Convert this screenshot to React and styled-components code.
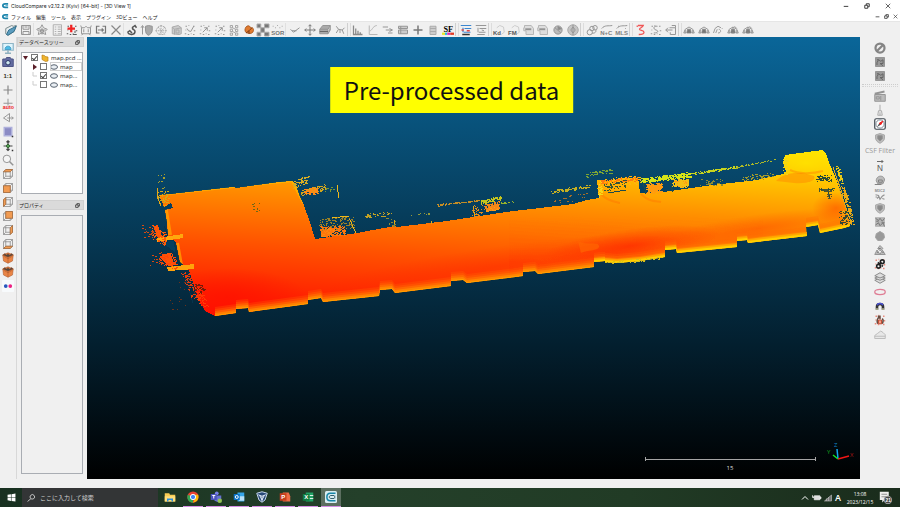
import React, { useState } from "react"
import styled, { createGlobalStyle } from "styled-components"

const GlobalStyle = createGlobalStyle`
  * { box-sizing: border-box; }
  body {
    margin: 0;
    background: #f0f0f0;
    color: #222;
    font-family: "Open Sans", "Noto Sans CJK JP", sans-serif;
    font-size: 5px;
  }
  button, input { font: inherit; color: inherit; }
  button {
    display: flex;
    align-items: center;
    justify-content: center;
    padding: 0;
    border: 0;
    background: transparent;
  }
`
const Page = styled.div`
  display: flex;
  flex-direction: column;
  min-height: 100vh;
`
const TitleBar = styled.header`
  display: flex;
  align-items: center;
  gap: 2px;
  height: 11px;
  padding: 0 2px;
  background: #fff;
`
const Title = styled.h1`
  flex: 1;
  margin: 0;
  font-family: Inter, sans-serif;
  font-size: 5px;
  font-weight: 400;
`
const MenuBar = styled.nav`
  display: flex;
  align-items: center;
  gap: 2px;
  height: 10px;
  padding: 0 2px;
  background: #fff;
`
const Menus = styled.div`
  display: flex;
  flex: 1;
  gap: 5px;
`
const WindowButtons = styled.div`
  display: flex;
  gap: ${(p) => (p.$small ? "4px" : "15px")};
  padding-right: ${(p) => (p.$small ? "0" : "7px")};
`
const ToolBar = styled.div`
  display: flex;
  align-items: center;
  height: 16px;
  padding-left: 4px;
  border-top: 1px solid #e6e6e6;
  background: #f0f0f0;
`
const ToolGroup = styled.div`
  display: grid;
  grid-template-columns: repeat(${(p) => p.$count}, 1fr);
  width: ${(p) => p.$width}px;
`
const Divider = styled.span`
  width: ${(p) => (p.$wide ? 4 : 2)}px;
  height: 13px;
  border-left: 1px solid ${(p) => (p.$wide ? "#cfcfcf" : "#e0e0e0")};
  border-right: ${(p) => (p.$wide ? "1px solid #dcdcdc" : "0")};
`
const ToolButton = styled.button`
  height: 14px;
`
const Glyph = styled.svg`
  display: block;
  flex: none;
  overflow: visible;
  width: ${(p) => p.$size || 12}px;
  height: ${(p) => p.$size || 12}px;
  fill: none;
  stroke: #949494;
  stroke-width: 1.3;
  text { stroke: none; font-family: "Liberation Sans", sans-serif; font-weight: 700; }
`
const Main = styled.main`
  display: flex;
  flex: 1;
  padding-bottom: 9px;
`
const SideBar = styled.aside`
  display: flex;
  flex-direction: column;
  width: ${(p) => p.$width}px;
  padding-top: 4px;
  border-right: ${(p) => (p.$left ? "1px solid #d8d8d8" : "0")};
`
const SideLabel = styled.span`
  height: 14px;
  color: #999;
  font-size: 7px;
  line-height: 12px;
  text-align: center;
  white-space: nowrap;
`
const SideRule = styled.hr`
  width: 36px;
  height: 3px;
  margin: 1px 2px 2px;
  border: 0;
  border-top: 1px dotted #ccc;
  border-bottom: 1px dotted #d4d4d4;
`
const Docks = styled.div`
  display: flex;
  flex-direction: column;
  gap: 6px;
  width: 70px;
  padding: 0 3px 5px 0;
`
const Dock = styled.section`
  display: flex;
  flex-direction: column;
  flex: ${(p) => (p.$grow ? "1" : "0 0 157px")};
`
const DockHeader = styled.header`
  display: flex;
  align-items: center;
  justify-content: space-between;
  height: 10px;
  padding: 0 3px 0 1px;
  border: 1px solid #d0d0d0;
  background: #dadada;
  line-height: 8px;
`
const DockBody = styled.div`
  flex: 1;
  margin: 5px 1px 0 4px;
  border: 1px solid #a9adb3;
  background: ${(p) => p.$bg};
`
const TreeRow = styled.div`
  display: flex;
  align-items: center;
  gap: 3px;
  height: 9px;
  padding-left: ${(p) => (p.$child ? 10 : 1)}px;
  font-size: 6px;
  line-height: 8px;
`
const Twisty = styled.svg`
  width: 5px;
  height: 7px;
  flex: none;
`
const Check = styled.input`
  appearance: none;
  display: grid;
  place-items: center;
  flex: none;
  width: 7px;
  height: 7px;
  margin: 0;
  border: 1px solid #777;
  background: #fff;
  &:checked::after {
    content: "";
    width: 2px;
    height: 4px;
    border: solid #444;
    border-width: 0 1px 1px 0;
    transform: rotate(40deg);
  }
`
const TreeLabel = styled.label`
  display: flex;
  align-items: center;
  gap: 2px;
  flex: 1;
  height: 9px;
  white-space: nowrap;
  outline: ${(p) => (p.$current ? "1px solid #d0d0d0" : "none")};
  outline-offset: -1px;
`
const Viewport = styled.section`
  position: relative;
  flex: 1;
  min-width: 0;
  background: linear-gradient(#0a6699, #000);
`
const Scene = styled.svg`
  display: block;
  width: 100%;
  height: 100%;
  text { font-family: "Open Sans", sans-serif; }
`
const Caption = styled.div`
  position: absolute;
  top: 30px;
  left: 50%;
  transform: translateX(-50%);
  margin-left: -22px;
  padding: 0 14px;
  background: #ffff00;
  color: #111;
  font-family: "Noto Sans CJK JP", sans-serif;
  font-size: 24px;
  line-height: 46px;
  white-space: nowrap;
`
const TaskBar = styled.footer`
  display: flex;
  align-items: stretch;
  height: 19px;
  background: linear-gradient(90deg, #183020, #24402a 40%, #213b25 70%, #1a2c1c);
  color: #fff;
`
const StartButton = styled.button`
  width: 22px;
`
const Search = styled.label`
  display: flex;
  align-items: center;
  gap: 4px;
  width: 136px;
  padding-left: 5px;
  background: #333536;
`
const SearchInput = styled.input`
  width: 110px;
  padding: 0;
  border: 0;
  outline: 0;
  background: transparent;
  font-family: "Noto Sans CJK JP", sans-serif;
  font-size: 6px;
  &::placeholder { color: #d0d0d0; opacity: 1; }
`
const Apps = styled.div`
  display: flex;
  flex: 1;
  gap: 3px;
  padding-left: 2px;
`
const AppButton = styled.button`
  width: 20px;
  border-bottom: 1px solid ${(p) => (p.$open ? "#d58ee4" : "transparent")};
  background: ${(p) => (p.$active ? "#5c6f60" : "transparent")};
`
const Tray = styled.div`
  display: flex;
  align-items: center;
  gap: 3px;
  padding-right: 8px;
`
const InputMode = styled.span`
  font-size: 9px;
  font-weight: 600;
`
const Clock = styled.time`
  width: 32px;
  font-size: 5px;
  line-height: 8px;
  text-align: center;
`

const G = "#949494"
const D = "#777"

// small cube used by the view buttons, with one side painted
const Cube = ({ side }) => (
  <g stroke="#888" strokeWidth="1">
    <path d="M2 5h9v9H2zM2 5l3-3h9l-3 3M14 2v9l-3 3M5 2v9h9M5 11l-3 3" />
    {side && <path d={side} fill="#f19b52" stroke="#a66a3a" />}
  </g>
)
const Box = () => (
  <g stroke="#a9572a" strokeWidth=".7">
    <path d="M1 4l7-3 7 3-1 8-6 3-6-3z" fill="#e98445" />
    <path d="M1 4l3-2 2 2 2-2 2 2 3-2 2 2-7 3z" fill="#54473f" />
    <path d="M8 7v8M3 6l5 3 5-3" />
  </g>
)
const Roof = ({ extra }) => (
  <g stroke="#888" strokeWidth="1.1">
    <path d="M1 12l2-5 5-3 5 3 2 5" />
    <path d="M5 12l1-5h4l1 5z" fill="#777" />
    <path d="M3 12V8M13 12V8M1 12h3M12 12h3" />
    {extra}
  </g>
)
const Dots = ({ color = G, width = 1.3, children }) => (
  <g stroke={color}>
    <path strokeWidth={width} d="M2 3h2M6 2h1M12 3h2M2 8h1M13 9h2M5 14h2M9 13h1M12 14h2M1 13h2" />
    {children}
  </g>
)

const icons = {
  open: <g><path d="M1 13V6l8-4 2 1 4-1-3 8-8 5z" fill="#e8eef2" stroke="#788" /><path d="M2 14l3-6 10-5-3 7-8 5z" fill="#5c9dbf" stroke="#33708d" /></g>,
  save: <path d="M2 2h12v12H2zM4 2v5h8V2M4 14v-4h8v4M6 4h4" />,
  gear: <path d="M8 1l2 4 5 2-3 3 1 4-5-2-5 2 1-4-3-3 5-2zM6 8h4v3H6zM8 5v9M3 8h10" />,
  list: <path d="M3 1h11v14H3zM5 4h2M9 4h4M5 7h2M9 7h4M5 10h2M9 10h4M5 13h2M9 13h4" stroke="#b0b0b0" />,
  plusRed: <g><Dots color="#555" /><path d="M7 1v10M2 6h10" stroke="#f02222" strokeWidth="3" /><path d="M9 14h5M12 9v3" stroke="#555" /></g>,
  clone: <path d="M2 5h4l2-2 2 2h4v8H2zM2 5L1 2M14 5l1-3M4 13l-2 2M12 13l2 2M5 7v4M11 7v4" />,
  merge: <path d="M6 3H2v9h4M10 3h4v9h-4M4 8h7M9 6l2 2-2 2" stroke={D} strokeWidth="1.6" />,
  cross: <path d="M2 2l12 12M14 2L2 14" stroke="#888" strokeWidth="1.6" />,
  arm: <path d="M2 11c2 4 10 4 10-1 0-3-5-2-3-6M8 5l4-3 2 3M2 11l3-2 3 3" stroke="#555" strokeWidth="2" />,
  shieldUp: <g><path d="M2 14V3M0 5l2-3 2 3" /><path d="M6 3l4-1 5 1v5c0 4-3 6-5 7-3-1-4-4-4-7z" fill="#aaa" /></g>,
  net: <path d="M8 2l5 2 2 5-3 5H5L1 9l3-5zM4 4l9 10M13 4L5 14M1 9h14M8 2v12" strokeDasharray="2 1" stroke="#aaa" />,
  block: <path d="M3 4l8-2 4 3v8l-3 1-9-1zM3 4l3 3v7M6 7l9-2M8 8h4v4H8z" fill="#ccc" stroke="#aaa" />,
  scatter: <Dots><path d="M5 11l6-6M11 9V5H7" /></Dots>,
  scatter2: <Dots><path d="M4 6l2 3 3 1 4-7" /></Dots>,
  eights: <path d="M3 2h3v3H3zM3 7h3v3H3zM3 12h3v3H3zM10 2h3v3h-3zM10 7h3v3h-3zM10 12h3v3h-3zM6 5l4 2M6 10l4 2" stroke="#a5a5a5" />,
  primitive: <g stroke="#a95820"><path d="M3 6c1-4 6-5 7-1 4-1 5 3 3 6-2 2-5 2-7 1-3 0-4-4-3-6z" fill="#e07b30" /><path d="M4 12l4-3 4-4M8 9v4" stroke="#7d3b16" /></g>,
  checker: <path d="M0 0h5v5H0zM10 0h6v5h-6zM5 5h5v6H5zM0 11h5v5H0zM10 11h6v5h-6z" fill="#777" stroke="#aaa" />,
  sor: <g><path d="M1 3h1M4 5h1M7 2h1M10 5h1M13 3h1" /><text x="-1" y="15" fontSize="8" fill="#777">SOR</text></g>,
  tick: <path d="M2 7l4 4 8-6M4 9h6" />,
  move: <path d="M8 1v14M1 8h14M6 3l2-2 2 2M6 13l2 2 2-2M3 6L1 8l2 2M13 6l2 2-2 2" stroke={D} />,
  slab: <g><path d="M1 7l4-5h10l-3 5zM1 7v6h11V7M12 13l3-5V2" fill="#aaa" /><path d="M1 10h11" stroke="#666" /></g>,
  branch: <path d="M3 3l3 4 5 1 3-3M6 7l-3 5M11 8l2 5M8 8v4" />,
  hist: <path d="M2 2v12h12M5 13V6M8 13v-4M11 13v-2" stroke="#888" strokeWidth="1.7" />,
  curve: <path d="M3 2v12h11M4 9c3 0 3-6 9-7" stroke="#b5b5b5" />,
  lines: <path d="M1 4h7M5 8h8M8 12h6M10 6l4 2-4 2" />,
  rows: <path d="M2 3h12v3H2zM2 8h12v5H2zM5 3v10" fill="#ccc" />,
  plusDark: <path d="M8 2v12M2 8h12" stroke="#777" strokeWidth="2" />,
  calc: <path d="M4 3h8v11H4zM4 6h8M4 10h8" fill="#ccc" stroke="#aaa" />,
  sf: <g><text x="2" y="10" fontSize="11" fill="#000" style={{ fontFamily: "Liberation Serif" }}>SF</text><path d="M0 13h4" stroke="#e7e728" strokeWidth="3" /><path d="M4 13h3" stroke="#24b9e2" strokeWidth="3" /><path d="M7 13h4" stroke="#e224b5" strokeWidth="3" /><path d="M11 13h5" stroke="#e23a24" strokeWidth="3" /></g>,
  canupo: <g><path d="M1 2h14M4 5v6M6 6h9M5 11h9" stroke="#3c86d0" strokeWidth="1.6" /><path d="M2 8h3M9 9h4" stroke="#df4545" strokeWidth="2" /><path d="M3 14h10" stroke="#333" strokeWidth="2" /></g>,
  canupoGrey: <path d="M1 2h14M4 5v6M6 6h9M5 11h9M3 14h10M9 8l3 1" />,
  kd: <g><path d="M5 5l4-3 5 2 1 7-4 3" stroke="#ccc" /><text x="0" y="15" fontSize="8" fill="#555">Kd</text></g>,
  fm: <g><path d="M5 5l4-3 5 2 1 7-4 3" stroke="#ccc" /><text x="0" y="15" fontSize="8" fill="#555">FM</text></g>,
  page: <g><path d="M2 2h9l3 4v8H4V9H1V5h1z" stroke="#b5b5b5" fill="#ddd" /><path d="M3 7h8" strokeWidth="2.500" /></g>,
  ball: <g><circle cx="8" cy="8" r="5.500" fill="#bbb" /><path d="M4 5l8 7M8 3v5l5-2" fill="#888" /></g>,
  sphere: <g><circle cx="8" cy="8" r="7" fill="#c5c5c5" stroke="#aaa" /><path d="M8 1v14M8 4l-3 4 3 4M8 4l3 4-3 4" /></g>,
  clover: <g><circle cx="5" cy="11" r="3.500" /><circle cx="8" cy="6" r="3" /><circle cx="12" cy="5" r="3" /><path d="M8 12c4 1 6-2 5-4" /></g>,
  nc: <g><path d="M1 6c4-5 9-3 14-4" /><text x="-1" y="15" fontSize="8" fill="#808080">N+C</text></g>,
  mls: <g><path d="M1 6c4-5 9-3 14-4M3 3h1M12 6h1" /><text x="-1" y="15" fontSize="8" fill="#808080">MLS</text></g>,
  redS: <path d="M4 2h7c-1 3-5 3-5 5s6 1 6 4-4 3-7 3M3 2v2" stroke="#ef5555" strokeWidth="1.700" />,
  greyS: <Dots><path d="M10 3C4 2 4 7 8 8s3 4-3 4" /></Dots>,
  plug: <path d="M6 5h8v9H7v-3M1 8h9M4 5L1 8l3 3M9 2h5v3" />,
  roof: <Roof />,
  roof2: <Roof extra={<path d="M8 4v9M10 3l3 3" />} />,
  roofHalf: <path d="M2 12l2-6 4-3 4 2M5 12l2-5M8 12c5 0 4-5 1-5M13 6h1" stroke="#999" />,

  monitor: <g><path d="M1 2h14v9H1z" fill="#def5fc" stroke="#8fb6c7" strokeWidth="1.600" /><path d="M4 10c0-6 8-6 8 0z" fill="#4cbde6" stroke="#4a9fc9" /><path d="M8 11v3M4 15h8" stroke="#8fb0bf" strokeWidth="2" /></g>,
  camera: <g><path d="M1 4h4l1-2h5l1 2h3v10H1z" fill="#626ba0" stroke="#4b5284" /><circle cx="8" cy="9" r="3" fill="#cfeaf0" stroke="#273163" /></g>,
  ratio: <text x="2" y="11" fontSize="8" fill="#332">1:1</text>,
  plus: <path d="M8 2v12M2 8h12" stroke="#888" strokeWidth="1.6" />,
  auto: <g><path d="M8 1v9M2 7h12" /><text x="1" y="15" fontSize="7" fill="#e22">auto</text></g>,
  flip: <path d="M10 2L2 8l8 5zM7 8h8M13 6l2 2-2 2" />,
  purple: <g><path d="M3 2h10v11H3z" fill="#8b8bc4" stroke="#aeb0db" strokeWidth="2" /><path d="M13 14h2" stroke="#333" strokeWidth="2" /></g>,
  pan: <g><path d="M8 1v13M2 8h12M6 3l2-2 2 2M6 12l2 2 2-2" stroke="#444" strokeWidth="1.6" /><circle cx="8" cy="8" r="2" fill="#63b763" stroke="#285d28" /><path d="M13 14h2" stroke="#333" strokeWidth="2" /></g>,
  zoom: <g><circle cx="6.500" cy="6.500" r="5" fill="#f5f5f5" /><path d="M10 10l5 5" strokeWidth="2" /></g>,
  cubeTop: <Cube side="M2 5l3-3h9l-3 3z" />,
  cubeFront: <Cube side="M2 5h9v9H2z" />,
  cubeLeft: <Cube side="M2 5l3-3v9l-3 3z" />,
  cubeBack: <Cube side="M5 2h9v9H5z" />,
  cubeRight: <Cube side="M11 5l3-3v9l-3 3z" />,
  cubeBottom: <Cube side="M2 14l3-3h9l-3 3z" />,
  isoBox: <Box />,
  flickr: <g stroke="none"><rect width="16" height="16" rx="1" fill="#f7fafc" /><circle cx="5" cy="8" r="2.500" fill="#2756bd" /><circle cx="11" cy="8" r="2.500" fill="#ec2182" /></g>,

  forbid: <g><circle cx="8" cy="8" r="6" stroke="#858585" strokeWidth="3" /><path d="M4 12l8-8" stroke="#858585" strokeWidth="3" /></g>,
  edl: <g><path d="M2 2h12v12H2z" fill="#999" /><path d="M4 12V9l2-4 3 2 3-2v5H8l4 3M4 5h2" stroke="#666" /></g>,
  clap: <g><path d="M1 6h14v9H1z" fill="#bbb" /><path d="M1 5l13-3" strokeWidth="2.500" /><path d="M3 9h4v3H3zM9 8v6" /></g>,
  broom: <path d="M8 1v8M6 9h4l1 6H5zM8 11v4" stroke="#aaa" />,
  compass: <g><rect x="1" y="1" width="14" height="14" rx="2" fill="#fff" stroke="#3d454e" strokeWidth="1.6" /><circle cx="8" cy="8" r="5.500" stroke="#7c8995" /><path d="M4 12l3-5 2 2z" fill="#555" stroke="none" /><path d="M12 4L7 7l2 2z" fill="#e22" stroke="#e22" /></g>,
  shield: <g><path d="M2 4l6-2 6 2v4c0 4-4 6-6 7-3-1-6-4-6-7z" fill="#bbb" stroke="#aaa" /><path d="M5 5h6v4l-3 3-3-3z" fill="#888" /></g>,
  normal: <g><path d="M4 2h8M10 0l2 2-2 2" stroke="#666" /><text x="4" y="15" fontSize="11" fill="#555" style={{ fontWeight: 400 }}>N</text></g>,
  helmet: <g><path d="M3 9c0-8 11-8 11-1l-2 5H5z" fill="#bbb" /><path d="M6 8h5v3H6zM1 14h9" stroke="#808080" /></g>,
  m3c2: <g><text x="1" y="5" fontSize="5" fill="#888">M3C2</text><path d="M2 9l4 1 2 5 3-4 3-2M4 14l3-3M11 14l3 1M2 12h2" strokeWidth="1.6" /></g>,
  mosaic: <g><path d="M2 2h12v12H2z" fill="#b5b5b5" stroke="#bbb" /><path d="M2 3l4 3 2-3 3 4 3-4M2 12l4-3 2 4 4-4 2 5M3 7h3M10 9h4" stroke="#777" /></g>,
  poly: <path d="M8 2l5 3 1 5-3 4H5l-3-4 1-5z" fill="#999" stroke="#a0a0a0" />,
  trefoil: <g fill="#bbb"><path d="M5 6l3-4 4 4-4 3zM1 14l3-6 4 6zM8 14l3-6 4 6z" /><path d="M6 6h3M4 11h2M11 11h2" stroke="#777" /></g>,
  chain: <g><Dots color="#e98a7c" width={2} /><g stroke="#222" strokeWidth="2.200"><circle cx="6" cy="11" r="2.500" /><circle cx="11" cy="5" r="2.500" /><path d="M7 9l3-3M5 6l3 2M10 10l2 1" /></g></g>,
  layers: <g fill="#ddd" stroke="#888"><path d="M1 11l7-3 7 3-7 4z" /><path d="M1 8l7-3 7 3-7 3z" /><path d="M1 5l7-4 7 4-7 3z" /></g>,
  ring: <ellipse cx="8" cy="8" rx="7" ry="3.500" stroke="#df7d94" strokeWidth="1.700" />,
  magnet: <g><path d="M4 13V9c0-5 8-5 8 0v4" stroke="#333" strokeWidth="3.500" /><path d="M4 7c1-3 7-3 8 0" stroke="#4850d8" strokeWidth="2" /><path d="M4 11v2M12 11v2" stroke="#d9d9a6" strokeWidth="2" /></g>,
  hand: <g><Dots color="#e98a7c" width={2} /><path d="M5 13c-2-5 0-7 1-8V2M8 7V2M11 13c2-4 1-6 0-7" stroke="#674b40" strokeWidth="2" /><path d="M6 8h4v5H6z" fill="#f5a087" stroke="#c14c33" /></g>,
  fade: <path d="M1 14h14V9l-3-3-3-2-4 3-4 3zM1 11h14" stroke="#bbb" fill="#e7e7e7" />,
}

const Icon = ({ name, size }) => (
  <Glyph viewBox="0 0 16 16" $size={size} aria-hidden="true">{icons[name]}</Glyph>
)

const topGroups = [
  { width: 29, items: ["open", "save"] },
  { width: 88, items: ["gear", "list", "plusRed", "clone", "merge", "cross"] },
  { width: 160, items: ["arm", "shieldUp", "net", "block", "scatter2", "scatter", "scatter", "eights", "primitive", "checker", "sor"] },
  { width: 60, items: ["tick", "move", "slab", "branch"] },
  { width: 104, wide: true, items: ["hist", "curve", "lines", "rows", "plusDark", "calc", "sf"] },
  { width: 29, wide: true, items: ["canupo", "canupoGrey"] },
  { width: 88, wide: true, items: ["kd", "fm", "page", "page", "ball", "sphere"] },
  { width: 45, wide: true, items: ["clover", "nc", "mls"] },
  { width: 45, wide: true, items: ["redS", "greyS", "plug"] },
  { width: 73, wide: true, items: ["roof", "roof", "roofHalf", "roof2", "roof2"] },
]
const leftTools = [
  "monitor", "camera", "ratio", "plus", "auto", "flip", "purple", "pan", "zoom",
  "cubeTop", "cubeFront", "cubeLeft", "cubeBack", "cubeRight", "cubeBottom", "isoBox", "isoBox", "flickr",
]
const rightTools = [
  "helmet", "m3c2", "shield", "mosaic", "poly", "trefoil", "chain", "layers", "ring", "magnet", "hand", "fade",
]

const CLOUD =
  "M159 195L172 194 233 187 236 188 280 182 292 181 296 185 300 197 303 203 310 222 315 239 357 233 373 230 395 226 397 227 447 221 480 216 513 211 540 208 573 204 587 200 599 198 " +
  "597 180 612 181 620 178 638 178 640 193 663 192 713 185 757 180 783 174 786 171 783 163 785 155 800 153 823 150 826 154 830 165 837 181 842 197 846 208 850 226 844 228 820 233 818 225 " +
  "806 227 807 236 748 243 747 240 737 241 737 247 677 253 676 249 665 250 665 257 640 261 617 263 605 262 605 261 594 262 594 267 538 274 535 271 523 272 523 276 467 283 463 280 451 281 " +
  "451 286 395 293 392 289 380 290 379 296 323 302 321 298 308 300 308 304 249 312 248 308 236 309 236 313 215 316 205 311 198 298 189 270 180 262 176 242 168 236 167 222 165 210 173 208 171 203 164 207z"

const EDGE_RIGHT =
  "M852 226L820 233 818 225 806 227 807 236 748 243 747 240 737 241 737 247 677 253 676 249 665 250 665 257 640 261 617 263 605 262 605 261 594 262"
const EDGE_LEFT =
  "M605 261L594 262 594 267 538 274 535 271 523 272 523 276 467 283 463 280 451 281 " +
  "451 286 395 293 392 289 380 290 379 296 323 302 321 298 308 300 308 304 249 312 248 308 236 309 236 313 215 316"

// the lower wall fades upwards, one band per height
const bands = [
  [9, "#ff6a00", 0.25], [7, "#ff7800", 0.3], [5, "#ff8c00", 0.4], [3, "#ffa000", 0.5], [1, "#ffb800", 0.6],
]

// loose points round the main surface: x, y, width, height, slope, count, colour
const clusters = [
  [156, 174, 9, 16, 0, 10, "#a89e2d"], [158, 191, 10, 12, 0, 40, "#d4a91b"],
  [141, 225, 12, 12, 0, 20, "#d44a10"], [152, 225, 14, 14, 0.5, 70, "#ff5a08"],
  [150, 252, 12, 13, 0, 20, "#d9480d"], [160, 252, 16, 12, 0.3, 70, "#ff4608"],
  [180, 272, 9, 26, 0.4, 60, "#e83b08"], [192, 286, 8, 20, 0.4, 60, "#ff3a05"], [168, 280, 20, 30, 0, 12, "#6b3219"],
  [293, 181, 15, 8, -0.4, 60, "#d7ad24"], [300, 190, 25, 6, -0.25, 80, "#d3a61b"], [304, 188, 13, 6, 0, 70, "#ff8a16"], [325, 187, 9, 5, 0, 9, "#779435"],
  [319, 219, 35, 12, -0.1, 110, "#9c8226"], [320, 226, 25, 10, 0, 160, "#ff760c"],
  [365, 214, 26, 4, -0.1, 40, "#c3a224"], [385, 216, 12, 12, 0, 12, "#8f8a34"], [407, 214, 30, 3, -0.1, 8, "#93993b"],
  [437, 204, 42, 2, -0.12, 60, "#c58d25"], [472, 205, 11, 11, 0, 30, "#e48a1a"], [480, 200, 20, 4, -0.2, 90, "#c5c51e"], [484, 204, 15, 7, -0.2, 120, "#f68618"],
  [500, 202, 14, 2, -0.1, 14, "#98b42b"], [551, 190, 40, 3, -0.14, 70, "#c7b021"], [552, 198, 35, 7, -0.2, 18, "#a86d29"],
  [586, 172, 25, 5, -0.15, 45, "#7da534"], [597, 179, 43, 9, -0.1, 110, "#ffb50d"], [600, 180, 38, 4, -0.1, 90, "#ff7c0f"], [640, 178, 50, 5, -0.12, 280, "#d6e317"],
  [646, 183, 16, 10, 0, 190, "#ff9b10"], [672, 179, 16, 8, 0, 160, "#f3bf15"], [690, 173, 48, 2, -0.16, 90, "#cad51c"],
  [735, 166, 40, 2, -0.2, 36, "#aeb827"], [700, 179, 24, 7, 0, 30, "#8d8b31"], [740, 175, 32, 6, -0.1, 45, "#a39b2b"],
  [835, 165, 3, 18, 0.3, 45, "#e9cb16"], [840, 185, 4, 30, 0.3, 80, "#ecab14"], [840, 210, 10, 14, 0.3, 70, "#e9ab16"],
  [598, 180, 3, 17, 0, 25, "#f6d918"], [783, 158, 4, 16, 0, 26, "#eed41b"], [605, 261, 58, 3, -0.08, 50, "#d8c01a"],
]
const holes = [
  [251, 202, 10, 10, 0, 12, "#6d6818"], [194, 284, 10, 9, 0, 36, "#711d0c"], [604, 184, 22, 7, -0.2, 60, "#345538"],
  [816, 175, 15, 6, 0, 50, "#274938"], [818, 188, 15, 3, 0, 30, "#405636"], [825, 190, 6, 9, 0, 18, "#54552d"],
  [839, 210, 9, 14, 0, 50, "#314936"],
]

// every cluster gets the same points on each render
const points = ([x, y, w, h, slope, count], seed) => {
  let s = seed * 7919 + 13
  const next = () => {
    s = (s * 16807) % 2147483647
    return s / 2147483647
  }
  next()
  let d = ""
  for (let i = 0; i < count; i++) {
    const a = next()
    const b = next()
    // steep, narrow clusters lean sideways instead of rising
    const px = x + a * w + (h > w ? b * h * slope : 0)
    const py = y + b * h + (h > w ? 0 : a * w * slope)
    const len = next() > 0.6 ? 2 : 1
    d += `M${Math.round(px)} ${Math.round(py)}h${len}v1h-${len}z`
  }
  return d
}

function PointCloud() {
  return (
    <Scene viewBox="87 37 773 442" role="img" aria-label="3D View 1">
      <defs>
        <linearGradient id="height" gradientUnits="userSpaceOnUse" x1="300" y1="314" x2="312" y2="124">
          <stop offset="0" stopColor="#ff1200" />
          <stop offset=".35" stopColor="#ff5200" />
          <stop offset=".65" stopColor="#ff9000" />
          <stop offset="1" stopColor="#ffe600" />
        </linearGradient>
        <radialGradient id="low">
          <stop offset="0" stopColor="#ff1200" stopOpacity=".8" />
          <stop offset="1" stopColor="#ff1200" stopOpacity="0" />
        </radialGradient>
        <radialGradient id="high">
          <stop offset="0" stopColor="#ffe100" stopOpacity=".8" />
          <stop offset="1" stopColor="#ffd000" stopOpacity="0" />
        </radialGradient>
        <clipPath id="surface"><path d={CLOUD} /></clipPath>
      </defs>
      <g shapeRendering="crispEdges">
        <path d={CLOUD} fill="url(#height)" />
      </g>
      <g clipPath="url(#surface)" fill="none">
        <ellipse cx="228" cy="298" rx="80" ry="30" fill="url(#low)" />
        <ellipse cx="500" cy="266" rx="180" ry="20" transform="rotate(-8 500 266)" fill="url(#low)" opacity=".35" />
        <ellipse cx="630" cy="246" rx="90" ry="17" transform="rotate(-8 630 246)" fill="url(#low)" opacity=".65" />
        <ellipse cx="760" cy="228" rx="100" ry="14" transform="rotate(-8 760 228)" fill="url(#low)" opacity=".3" />
        <ellipse cx="836" cy="208" rx="24" ry="16" fill="url(#low)" opacity=".45" />
        <ellipse cx="806" cy="163" rx="32" ry="14" fill="url(#high)" />
        <path d="M776 181c8-9 24-10 38-5 3 5-8 8-20 7z" fill="#ff9a00" opacity=".7" />
        <path d="M578 241c8 5 20 0 21 5s-12 4-18 7z" fill="#ff6b00" opacity=".6" />
        <path d="M601 194c6 7 14 8 19 9M641 194c8 8 14 7 20 8M790 170c8 4 22 4 33 1" stroke="#ff6a00" strokeWidth="2" opacity=".35" />
        {bands.map(([up, color, opacity]) => (
          <g key={up} transform={`translate(0 ${-up})`} fill={color} opacity={opacity}>
            <path d={EDGE_LEFT + "V340H605z"} />
            <path d={EDGE_RIGHT + "V340H852z"} />
          </g>
        ))}
        <path d={EDGE_RIGHT + "V340H852z"} transform="translate(0 -4)" fill="#ffd000" opacity=".45" />
        <path d={EDGE_RIGHT + "V340H852z"} transform="translate(0 -2)" fill="#ffe600" opacity=".6" />
        <path d="M159 195L233 187 292 181 303 203" stroke="#ffc400" strokeWidth="2" opacity=".6" />
        <path d="M165 205l5 30M177 243l4 22" stroke="#ffab00" strokeWidth="4" opacity=".7" />
      </g>
      <g shapeRendering="crispEdges">
        <path d="M153 226l5-1 4 12-4 1zM162 254l10-1 5 12-9 1-6-7z" fill="#ff5206" />
        <path d="M307 190l6-3 6 1-2 4-8 1zM321 229l13-1 2 3-9 6h-6z" fill="#ff860f" />
        <path d="M486 208l13-3v5l-13 2zM650 186l12-2-4 6-10 2zM674 181l14-1v6l-10 1z" fill="#ff9b12" />
        <path d="M157 238l26-4v4l-26 4z" fill="#ffa70d" />
        <path d="M167 267l27-3v5l-26 2z" fill="#ffa20a" />
        <path d="M161 242l13-1 1 11z" fill="#05405f" />
        <path d="M164 226l4 9M171 254l4 10M188 274l8 24M184 273l9 30" stroke="#06344d" />
        <path d="M613 185l12-5M608 193l18-3M643 183l3 11M670 182l3 10" stroke="#1d4b4d" fill="none" />
        <path d="M818 178l4-2 4 3 4-2M820 189h12M827 189l3 9" stroke="#204a3f" fill="none" />
        <path d="M337 185l2 13M349 218l7 15M332 218l17-2" stroke="#f0b81a" fill="none" />
        <path d="M157 188v8l4 10M394 220v7M431 221v3M473 206l2 11M839 188l13 37M833 167l10 29" stroke="#e5a817" fill="none" />
        {clusters.map((c, i) => <path key={i} d={points(c, i + 1)} fill={c[6]} />)}
        {holes.map((c, i) => <path key={i} d={points(c, i + 80)} fill={c[6]} />)}
        <path d="M645 457v4M815 457v4M645 459h170" stroke="#a5a5a5" fill="none" />
      </g>
      <text x="730" y="470" fontSize="6" fill="#ddd" textAnchor="middle">15</text>
      <path d="M838 459l-1-10" stroke="#12a5f2" strokeWidth="1.500" />
      <path d="M838 459l-5-4" stroke="#16e626" strokeWidth="1.500" />
      <path d="M838 459l11-3" stroke="#f01616" strokeWidth="1.500" />
      <text x="834" y="447" fontSize="6" fill="#1287c9">Z</text>
      <text x="827" y="454" fontSize="6" fill="#13a51d">Y</text>
      <text x="850" y="457" fontSize="6" fill="#a51616">X</text>
    </Scene>
  )
}

const Logo = ({ size = 7 }) => (
  <Glyph viewBox="0 0 16 16" $size={size} aria-hidden="true">
    <path d="M14 4H7C3 4 2 6 2 8s1 4 5 4h7" stroke="#1e86ad" strokeWidth="4" />
    <path d="M8 8h6" stroke="#56aeca" strokeWidth="2" />
  </Glyph>
)
const Restore = ({ size = 6 }) => (
  <Glyph viewBox="0 0 16 16" $size={size} aria-hidden="true">
    <path d="M2 6h8v8H2zM6 6V2h8v8h-4" stroke="#333" strokeWidth="2.500" />
  </Glyph>
)
const Minimize = ({ size = 6 }) => (
  <Glyph viewBox="0 0 16 16" $size={size} aria-hidden="true"><path d="M2 9h12" stroke="#333" strokeWidth="2.500" /></Glyph>
)
const Close = ({ size = 6 }) => (
  <Glyph viewBox="0 0 16 16" $size={size} aria-hidden="true"><path d="M2 2l12 12M14 2L2 14" stroke="#333" strokeWidth="2" /></Glyph>
)

function Item({ item, onToggle }) {
  const id = `node-${item.id}`
  return (
    <TreeRow $child={item.child}>
      <Twisty viewBox="0 0 5 7">
        {item.twisty === "down" && <path d="M0 2h5L2.500 6z" fill="#5b1f28" />}
        {item.twisty === "right" && <path d="M1 1l4 3-4 3z" fill="#5b1f28" />}
        {item.twisty === "line" && <path d="M1 0v4h4" stroke="#ccc" fill="none" />}
      </Twisty>
      <Check type="checkbox" id={id} checked={item.checked} onChange={() => onToggle(item.id)} />
      <TreeLabel htmlFor={id} $current={item.current}>
        <Glyph viewBox="0 0 16 16" $size={8} aria-hidden="true">
          {item.child
            ? <ellipse cx="8" cy="8" rx="7" ry="4.500" fill="#e9eef3" stroke="#56616e" strokeWidth="2" />
            : <path d="M2 2l5 1 1 2 6 1v8l-5 1-7-4z" fill="#efb42d" stroke="#b87c15" />}
        </Glyph>
        {item.name}
      </TreeLabel>
    </TreeRow>
  )
}

const apps = [
  { name: "Explorer", art: <g stroke="none"><path d="M1 3h6l1 2h7v9H1z" fill="#f8cd54" /><path d="M1 7h14v7H1z" fill="#ffdf7b" /><path d="M4 10h8v4h-2v-2H6v2H4z" fill="#2d8edb" /></g> },
  { name: "Chrome", open: true, art: <g stroke="none"><circle cx="8" cy="8" r="7.500" fill="#e94235" /><path d="M8 8L1 5C-1 11 3 16 8 15.500z" fill="#34a853" /><path d="M8 5h7c1 5-1 8-3 9l-4 1.500 3-6z" fill="#fbbc05" /><circle cx="8" cy="8" r="3.500" fill="#4285f4" stroke="#fff" /></g> },
  { name: "Teams", open: true, art: <g stroke="none"><circle cx="9" cy="3" r="2.500" fill="#7b83eb" /><path d="M6 6h9v6l-4 3-5-2z" fill="#6670cf" /><path d="M1 4h8v8H1z" fill="#4b53bc" /><path d="M3 6h4M5 6v4" stroke="#fff" /><circle cx="13" cy="13" r="3" fill="#92c353" /></g> },
  { name: "Outlook", open: true, art: <g stroke="none"><path d="M6 2h9v12H6z" fill="#35a6e8" /><path d="M8 7h7v6H8z" fill="#b9e1f7" /><path d="M1 4h8v8H1z" fill="#0871c5" /><circle cx="5" cy="8" r="2" fill="none" stroke="#fff" /></g> },
  { name: "VirtualBox", open: true, art: <g><path d="M1 3l7-2 7 2-3 9-4 3-4-3z" fill="#294a79" stroke="#c8d9ef" /><path d="M3 5l5 2 5-2M8 7v7M5 6l3 6 3-6" stroke="#e8f1fc" /></g> },
  { name: "PowerPoint", open: true, art: <g stroke="none"><path d="M5 2h8l2 5v7H5z" fill="#ed6c47" /><path d="M1 3h9v10H1z" fill="#c43e1c" /><text x="3" y="11" fontSize="8" fill="#fff">P</text></g> },
  { name: "Excel", open: true, art: <g stroke="none"><path d="M5 2h10v12H5z" fill="#21a366" /><path d="M10 6h5M10 10h5" stroke="#dff4e8" /><path d="M1 4h9v9H1z" fill="#107c41" /><text x="3" y="11" fontSize="8" fill="#fff">X</text></g> },
  { name: "CloudCompare", open: true, active: true, art: <g><rect width="16" height="16" rx="2" fill="#d9edf1" stroke="none" /><path d="M14 3H7c-6 0-6 10 0 10h7" stroke="#1887a8" strokeWidth="2" /><path d="M12 6H8c-3 0-3 4 0 4h4M13 6v4" stroke="#315c69" /></g> },
]

export default function App() {
  const [tree, setTree] = useState([
    { id: 1, name: "map.pcd ...", checked: true, twisty: "down" },
    { id: 2, name: "map", child: true, checked: false, twisty: "right", current: true },
    { id: 3, name: "map...", child: true, checked: true, twisty: "line" },
    { id: 4, name: "map...", child: true, checked: false, twisty: "line" },
  ])
  const [query, setQuery] = useState("")

  const toggle = (id) => setTree(tree.map((n) => (n.id === id ? { ...n, checked: !n.checked } : n)))
  const tool = (name, i) => (
    <ToolButton key={name + i} type="button" aria-label={name}><Icon name={name} /></ToolButton>
  )

  return (
    <Page>
      <GlobalStyle />
      <TitleBar>
        <Logo />
        <Title>CloudCompare v2.12.2 (Kyiv) [64-bit] - [3D View 1]</Title>
        <WindowButtons>
          <button type="button" aria-label="minimize"><Minimize /></button>
          <button type="button" aria-label="restore"><Restore /></button>
          <button type="button" aria-label="close"><Close /></button>
        </WindowButtons>
      </TitleBar>
      <MenuBar>
        <Logo />
        <Menus>
          {["ファイル", "編集", "ツール", "表示", "プラグイン", "3Dビュー", "ヘルプ"].map((m) => (
            <button type="button" key={m}>{m}</button>
          ))}
        </Menus>
        <WindowButtons $small>
          <button type="button" aria-label="minimize view"><Minimize size={5} /></button>
          <button type="button" aria-label="restore view"><Restore size={5} /></button>
          <button type="button" aria-label="close view"><Close size={5} /></button>
        </WindowButtons>
      </MenuBar>
      <ToolBar>
        {topGroups.map((g, i) => (
          <React.Fragment key={i}>
            {i > 0 && <Divider $wide={g.wide} />}
            <ToolGroup $count={g.items.length} $width={g.width}>{g.items.map(tool)}</ToolGroup>
          </React.Fragment>
        ))}
      </ToolBar>
      <Main>
        <SideBar $width={17} $left>{leftTools.map(tool)}</SideBar>
        <Docks>
          <Dock>
            <DockHeader>データベースツリー<Restore size={5} /></DockHeader>
            <DockBody $bg="#fff">
              {tree.map((item) => <Item key={item.id} item={item} onToggle={toggle} />)}
            </DockBody>
          </Dock>
          <Dock $grow>
            <DockHeader>プロパティ<Restore size={5} /></DockHeader>
            <DockBody $bg="#f0f0f0" />
          </Dock>
        </Docks>
        <Viewport>
          <PointCloud />
          <Caption>Pre-processed data</Caption>
        </Viewport>
        <SideBar $width={40}>
          {["forbid", "edl", "edl"].map(tool)}
          <SideRule />
          {["clap", "broom", "compass", "shield"].map(tool)}
          <SideLabel>CSF Filter</SideLabel>
          {tool("normal", 0)}
          {rightTools.map(tool)}
        </SideBar>
      </Main>
      <TaskBar>
        <StartButton type="button" aria-label="start">
          <Glyph viewBox="0 0 16 16" $size={9}><path d="M1 3l6-1v6H1zM8 2l7-1v7H8zM1 9h6v5l-6-1zM8 9h7v6l-7-1z" fill="#fff" stroke="none" /></Glyph>
        </StartButton>
        <Search htmlFor="search">
          <Glyph viewBox="0 0 16 16" $size={9}><path d="M7 10a4 4 0 1 1 5 0c-2 1-4 1-5 0L1 15" stroke="#ddd" strokeWidth="1.500" /></Glyph>
          <SearchInput id="search" placeholder="ここに入力して検索" value={query} onChange={(e) => setQuery(e.target.value)} />
        </Search>
        <Apps>
          {apps.map((a) => (
            <AppButton key={a.name} type="button" aria-label={a.name} $open={a.open} $active={a.active}>
              <Glyph viewBox="0 0 16 16" $size={12}>{a.art}</Glyph>
            </AppButton>
          ))}
        </Apps>
        <Tray>
          <Glyph viewBox="0 0 16 16" $size={8}><path d="M2 11l6-6 6 6" stroke="#fff" strokeWidth="2" /></Glyph>
          <Glyph viewBox="0 0 16 16" $size={9}><path d="M4 5h10v7H4zM1 4v4h3M14 7h2v3h-2" fill="#ddd" stroke="#eee" /></Glyph>
          <Glyph viewBox="0 0 16 16" $size={8}><path d="M1 14L15 2v12zM5 14V9M9 14V6" stroke="#bbb" fill="#777" /></Glyph>
          <InputMode>A</InputMode>
          <Clock>13:08<br />2023/12/15</Clock>
          <Glyph viewBox="0 0 16 16" $size={13}>
            <path d="M1 1h11v10H7l-3 3v-3H1z" fill="#eee" stroke="none" />
            <path d="M3 4h7M3 7h7" />
            <circle cx="11" cy="11" r="4.500" fill="#444" stroke="#999" />
            <text x="8" y="13" fontSize="6" fill="#fff">21</text>
          </Glyph>
        </Tray>
      </TaskBar>
    </Page>
  )
}
